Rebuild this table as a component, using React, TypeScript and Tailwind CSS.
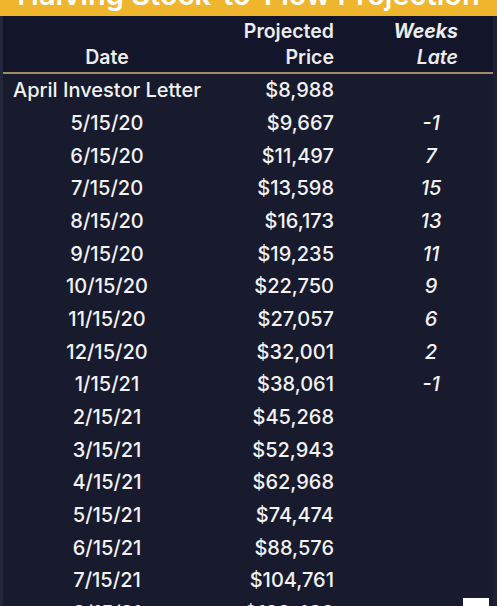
import React from "react";

const rows: [string, string, string][] = [
  ["April Investor Letter", "$8,988", ""],
  ["5/15/20", "$9,667", "-1"],
  ["6/15/20", "$11,497", "7"],
  ["7/15/20", "$13,598", "15"],
  ["8/15/20", "$16,173", "13"],
  ["9/15/20", "$19,235", "11"],
  ["10/15/20", "$22,750", "9"],
  ["11/15/20", "$27,057", "6"],
  ["12/15/20", "$32,001", "2"],
  ["1/15/21", "$38,061", "-1"],
  ["2/15/21", "$45,268", ""],
  ["3/15/21", "$52,943", ""],
  ["4/15/21", "$62,968", ""],
  ["5/15/21", "$74,474", ""],
  ["6/15/21", "$88,576", ""],
  ["7/15/21", "$104,761", ""],
  ["8/15/21", "$123,492", ""],
];

export default function App() {
  return (
    <div
      className="w-[497px] h-[606px] overflow-hidden bg-[#181a2e] relative"
      style={{ fontFamily: "Inter, 'Liberation Sans', sans-serif" }}
    >
      <div className="h-[16px] bg-[#efb62d] overflow-hidden flex justify-center">
        <div className="text-white font-semibold text-[29px] leading-[29px] mt-[-20px] whitespace-nowrap shrink-0">
          Halving Stock-to-Flow Projection
        </div>
      </div>
      <div className="h-[58px] bg-[#13152a] border-b-2 border-[#a08c66] flex text-[#ececec] font-semibold text-[19.5px] leading-[26px]">
        <div className="w-[214px] shrink-0 flex items-end justify-center pb-[2px]">Date</div>
        <div className="w-[120px] shrink-0 flex flex-col items-end justify-end pb-[2px]">
          <span>Projected</span>
          <span>Price</span>
        </div>
        <div className="w-[124px] shrink-0 flex flex-col items-end justify-end pb-[2px] italic font-bold">
          <span>Weeks</span>
          <span className="font-semibold">Late</span>
        </div>
      </div>
      <div className="flex flex-col text-[#f2f2f2] font-medium text-[20px]">
        {rows.map(([d, p, w], i) => (
          <div key={i} className="h-[32.67px] flex items-center">
            <div className="w-[214px] shrink-0 text-center whitespace-nowrap">{d}</div>
            <div className="w-[120px] shrink-0 text-right whitespace-nowrap">{p}</div>
            <div className="w-[194px] shrink-0 text-center italic font-medium">{w}</div>
          </div>
        ))}
      </div>
      <div className="absolute left-0 top-[16px] bottom-0 w-[3px] bg-[#24263a]" />
      <div className="absolute right-0 top-[16px] bottom-0 w-[4px] bg-[#1d1f33]" />
      <div className="absolute left-[463px] top-[598px] w-[26px] h-[10px] bg-white" />
    </div>
  );
}
